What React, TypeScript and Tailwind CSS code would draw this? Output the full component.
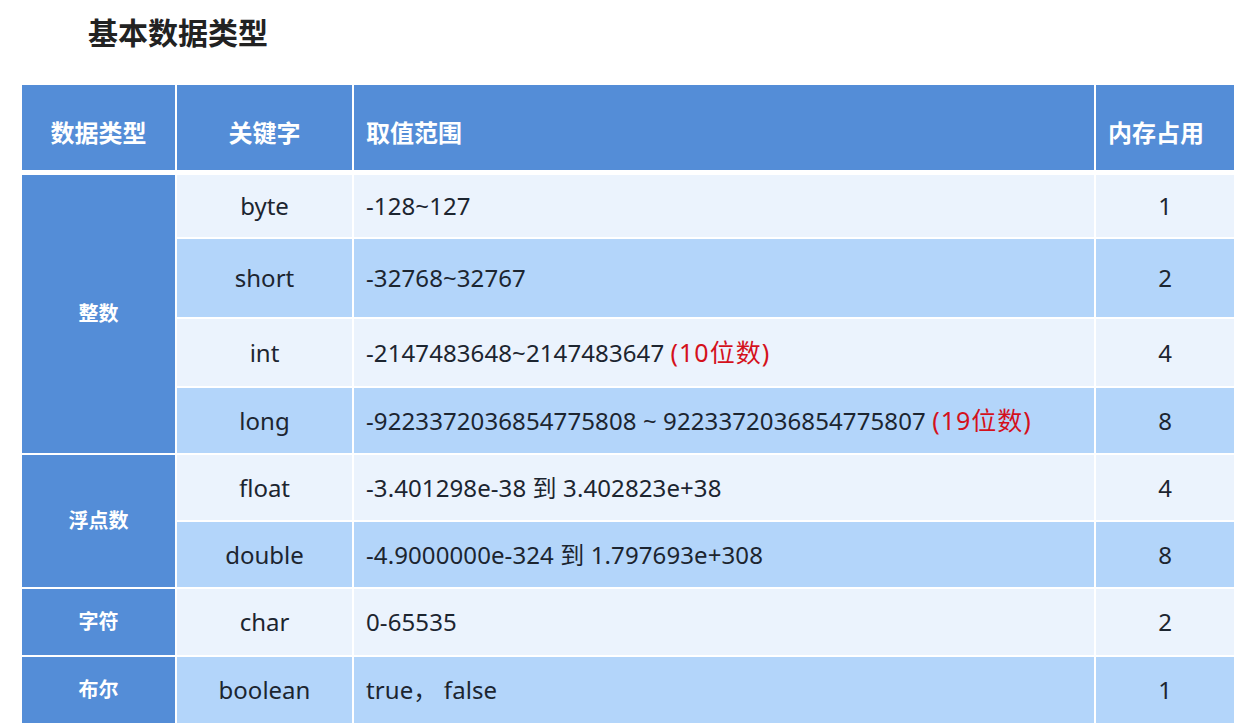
const FONT = "font-['Noto_Sans','Noto_Sans_CJK_SC',sans-serif]";

type Row = {
  key: string;
  range: string;
  note?: string;
  size: string;
  tone: 'light' | 'dark';
};

const rows: Row[] = [
  { key: 'byte', range: '-128~127', size: '1', tone: 'light' },
  { key: 'short', range: '-32768~32767', size: '2', tone: 'dark' },
  { key: 'int', range: '-2147483648~2147483647 ', note: '(10位数)', size: '4', tone: 'light' },
  { key: 'long', range: '-9223372036854775808 ~ 9223372036854775807 ', note: '(19位数)', size: '8', tone: 'dark' },
  { key: 'float', range: '-3.401298e-38 到 3.402823e+38', size: '4', tone: 'light' },
  { key: 'double', range: '-4.9000000e-324 到 1.797693e+308', size: '8', tone: 'dark' },
  { key: 'char', range: '0-65535', size: '2', tone: 'light' },
  { key: 'boolean', range: 'true， false', size: '1', tone: 'dark' },
];

// which body row each group starts on, and how many it spans
const groups = [
  { name: '整数', start: 'row-start-1 row-span-4' },
  { name: '浮点数', start: 'row-start-5 row-span-2' },
  { name: '字符', start: 'row-start-7 row-span-1' },
  { name: '布尔', start: 'row-start-8 row-span-1' },
];

const rowStarts = [
  'row-start-1', 'row-start-2', 'row-start-3', 'row-start-4',
  'row-start-5', 'row-start-6', 'row-start-7', 'row-start-8',
];

export default function App() {
  return (
    <div className={`w-[1234px] h-[728px] overflow-hidden bg-white ${FONT}`}>
      {/* Title */}
      <h1 className="pl-[88px] pt-[12px] h-[85px] text-[30px] font-bold leading-[42px] text-[#222]">
        基本数据类型
      </h1>

      <div className="ml-[22px]">
        {/* Header */}
        <div className="grid grid-cols-[153px_175px_740px_1fr] gap-x-[2px] h-[85px] text-white text-[24px] font-bold">
          <div className="bg-[#548dd7] flex items-center justify-center pt-[10px]">数据类型</div>
          <div className="bg-[#548dd7] flex items-center justify-center pt-[10px]">关键字</div>
          <div className="bg-[#548dd7] flex items-center pl-[12px] pt-[10px]">取值范围</div>
          <div className="bg-[#548dd7] flex items-center pl-[12px] pt-[10px]">内存占用</div>
        </div>

        {/* Body */}
        <div className="mt-[5px] grid grid-cols-[153px_175px_740px_1fr] grid-rows-[62px_78px_67px_65px_65px_65px_66px_66px] gap-[2px] text-[24px] text-[#1c2530]">
          {groups.map(g => (
            <div
              key={g.name}
              className={`col-start-1 ${g.start} bg-[#548dd7] flex items-center justify-center text-white text-[20px] font-bold`}
            >
              {g.name}
            </div>
          ))}
          {rows.map((r, i) => {
            const bg = r.tone === 'light' ? 'bg-[#ebf3fd]' : 'bg-[#b3d5fa]';
            const rowCls = rowStarts[i];
            return [
              <div key={r.key + 'k'} className={`col-start-2 ${rowCls} ${bg} flex items-center justify-center`}>
                {r.key}
              </div>,
              <div key={r.key + 'r'} className={`col-start-3 ${rowCls} ${bg} flex items-center pl-[12px] whitespace-pre tracking-[0.1px]`}>
                {r.range}
                {r.note && <span className="text-[#d4111c] text-[25px] tracking-[1px]">{r.note}</span>}
              </div>,
              <div key={r.key + 's'} className={`col-start-4 ${rowCls} ${bg} flex items-center justify-center`}>
                {r.size}
              </div>,
            ];
          })}
        </div>
      </div>
    </div>
  );
}
